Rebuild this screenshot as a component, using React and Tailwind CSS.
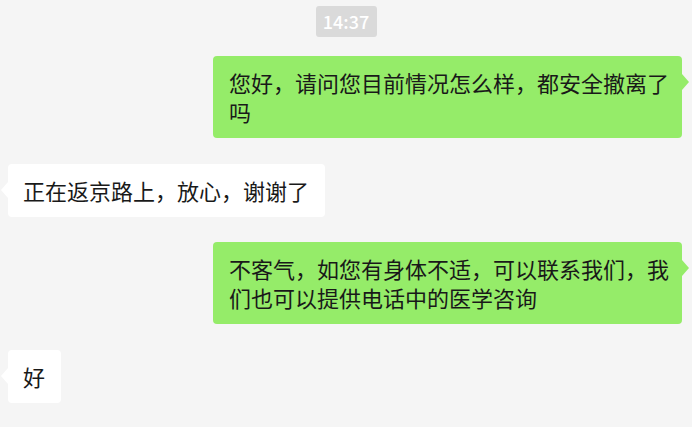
import React from 'react';

const messages = [
  { id: 1, mine: true, text: '您好，请问您目前情况怎么样，都安全撤离了吗', mt: 'mt-[19px]' },
  { id: 2, mine: false, text: '正在返京路上，放心，谢谢了', mt: 'mt-[26px]' },
  { id: 3, mine: true, text: '不客气，如您有身体不适，可以联系我们，我们也可以提供电话中的医学咨询', mt: 'mt-[25px]' },
  { id: 4, mine: false, text: '好', mt: 'mt-[26px]' },
];

const Bubble = ({ mine, text, mt }) => {
  if (mine) {
    return (
      <div className={`flex justify-end pr-[10px] ${mt}`}>
        <div className="relative max-w-[469px] rounded-[4px] bg-[#95ec69] pl-4 pr-[13px] py-3 text-[22px] leading-[29px] text-[#191919]">
          {text}
          {/* tail */}
          <span className="absolute top-[18px] -right-[7px] h-0 w-0 border-y-[8px] border-l-[7px] border-y-transparent border-l-[#95ec69]" />
        </div>
      </div>
    );
  }

  return (
    <div className={`flex justify-start pl-2 ${mt}`}>
      <div className="relative max-w-[469px] rounded-[4px] bg-white pl-[15px] pr-4 py-3 text-[22px] leading-[29px] text-[#191919]">
        {text}
        <span className="absolute top-[18px] -left-[7px] h-0 w-0 border-y-[8px] border-r-[7px] border-y-transparent border-r-white" />
      </div>
    </div>
  );
};

const App = () => {
  return (
    <div
      className="h-[427px] w-[692px] overflow-hidden bg-[#f5f5f5] pt-[6px]"
      style={{ fontFamily: '"Noto Sans CJK SC", "Noto Sans", sans-serif' }}
    >
      <div className="flex justify-center">
        <span className="flex h-[31px] w-[61px] items-center justify-center rounded-[3px] bg-[#dadada] text-[18px] font-medium text-white">
          14:37
        </span>
      </div>

      {messages.map((m) => (
        <Bubble key={m.id} mine={m.mine} text={m.text} mt={m.mt} />
      ))}
    </div>
  );
};

export default App;
